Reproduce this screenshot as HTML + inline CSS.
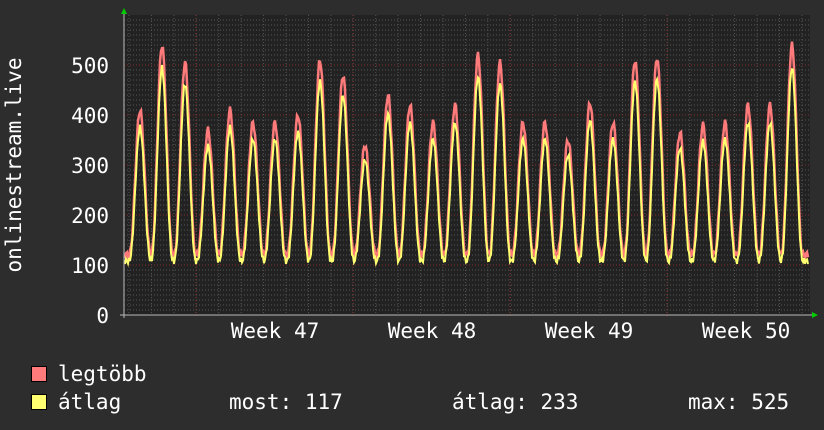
<!DOCTYPE html>
<html><head><meta charset="utf-8"><style>
html,body{margin:0;padding:0;background:#2d2d2d;}
svg{display:block}
text{font-family:"DejaVu Sans Mono","Liberation Mono",monospace;fill:#fff;font-size:21px}
</style></head><body>
<svg id="s" width="824" height="430" viewBox="0 0 824 430">
<rect x="0" y="0" width="824" height="430" fill="#2d2d2d"/>
<rect x="124" y="15" width="686" height="300" fill="#222"/>
<g id="grid"></g>
<polyline id="mx" fill="none" stroke="#ff7b7b" stroke-width="2.5"/>
<polyline id="av" fill="none" stroke="#ffff70" stroke-width="2"/>
<line x1="124" y1="12" x2="124" y2="318" stroke="#bbb" stroke-width="1"/>
<line x1="120" y1="315" x2="814" y2="315" stroke="#bbb" stroke-width="1"/>
<polygon points="121,14 127,14 124,8" fill="#0c0"/>
<polygon points="812,312 812,318 818,315" fill="#0c0"/>
<text x="109" y="73" text-anchor="end">500</text>
<text x="109" y="123" text-anchor="end">400</text>
<text x="109" y="173" text-anchor="end">300</text>
<text x="109" y="223" text-anchor="end">200</text>
<text x="109" y="273" text-anchor="end">100</text>
<text x="109" y="323" text-anchor="end">0</text>
<text transform="translate(21,165) rotate(-90)" text-anchor="middle">onlinestream.live</text>
<text x="275" y="338" text-anchor="middle">Week 47</text>
<text x="432" y="338" text-anchor="middle">Week 48</text>
<text x="589" y="338" text-anchor="middle">Week 49</text>
<text x="746" y="338" text-anchor="middle">Week 50</text>
<rect x="31.5" y="366.5" width="15" height="15" fill="#ff7b7b" stroke="#000"/>
<rect x="31.5" y="394.5" width="15" height="15" fill="#ffff70" stroke="#000"/>
<text x="58" y="381">legtöbb</text>
<text x="58" y="409">átlag</text>
<text x="229" y="409">most: 117</text>
<text x="452" y="409">átlag: 233</text>
<text x="688" y="409">max: 525</text>
</svg>
<script>
var g=document.getElementById('grid'),h='';
for(var v=10;v<600;v+=10){var y=315-v*0.5;if(v%100==0)continue;h+='<line x1="124" x2="810" y1="'+y+'" y2="'+y+'" stroke="#555" stroke-dasharray="1,2"/>';}
for(var x=129;x<810;x+=22.43){h+='<line y1="15" y2="315" x1="'+x+'" x2="'+x+'" stroke="#555" stroke-dasharray="1,2"/>';}
for(var v=100;v<600;v+=100){var y=315-v*0.5;h+='<line x1="124" x2="810" y1="'+y+'" y2="'+y+'" stroke="#803030" stroke-dasharray="1,2"/>';}
[196,353,510,667].forEach(function(x){h+='<line y1="15" y2="318" x1="'+x+'" x2="'+x+'" stroke="#803030" stroke-dasharray="1,2"/>';});
g.innerHTML=h;
var P=[[140,410],[162,540],[185,505],[208,370],[230,410],[253,385],[275,385],[298,400],[320,510],[343,480],[365,340],[388,440],[410,420],[433,385],[455,420],[478,520],[500,505],[523,385],[545,385],[568,350],[590,425],[613,385],[635,510],[657,515],[680,365],[703,380],[725,385],[748,420],[770,420],[792,540]];
var mx=[],av=[];
for(var x=125;x<=808;x+=1){
 var best=0;
 for(var i=0;i<P.length;i++){var d=(x-P[i][0])/22.43;if(Math.abs(d)>0.5)continue;
  var s=Math.pow(Math.cos(Math.PI*d),2.5);var val=120+(P[i][1]-120)*s;if(val>best)best=val;}
 if(best<120)best=120;
 var n=Math.sin(x*1.7)*7;
 var m=best+n, a=108+(best-120)*0.92+Math.sin(x*2.3)*6;
 mx.push(x+','+(315-m*0.5).toFixed(1));av.push(x+','+(315-a*0.5).toFixed(1));
}
document.getElementById('mx').setAttribute('points',mx.join(' '));
document.getElementById('av').setAttribute('points',av.join(' '));
</script>
</body></html>
